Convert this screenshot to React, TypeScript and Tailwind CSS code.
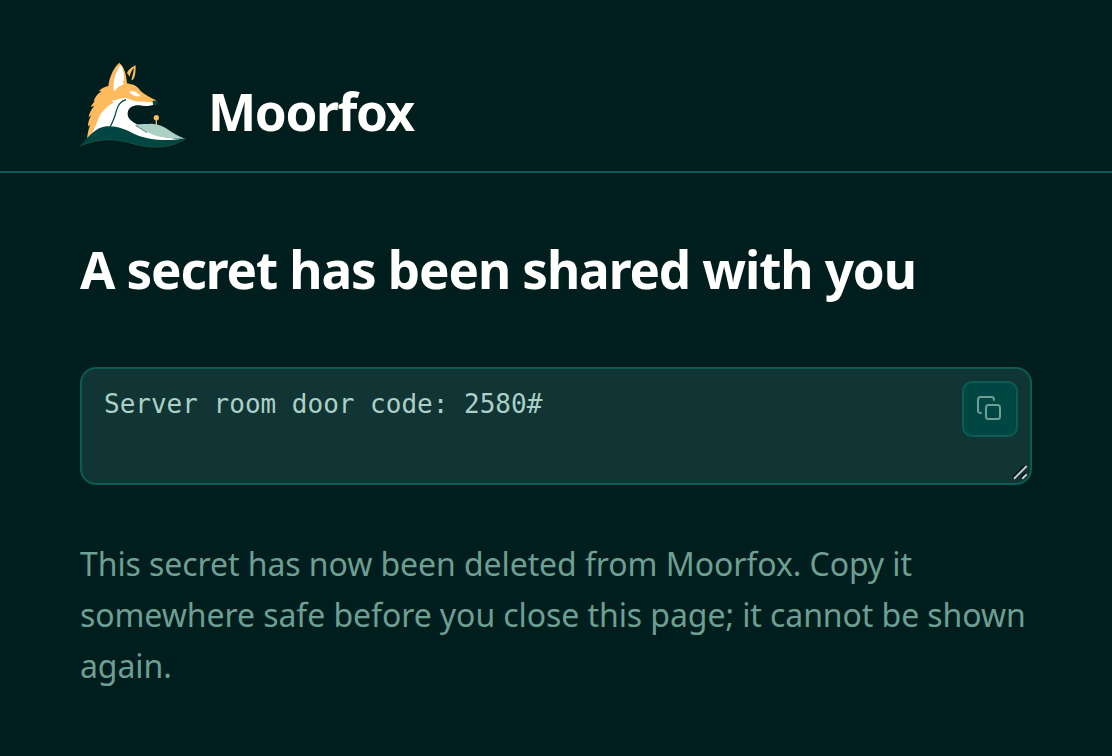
const FoxLogo = () => {
  return (
    <svg
      className="h-[86px] w-[108px] shrink-0"
      viewBox="6 6 324 258"
      fill="none"
      aria-hidden="true"
    >
      {/* far ear */}
      <path fill="#fdbb5e" d="M173 16C160 22 149 31 147 40L156 50L162 61C168 58 173 50 173 16Z" />
      <path fill="#001e1d" d="M168 24C160 32 156 42 155 54L161 58C163 48 166 38 168 24Z" />
      {/* fur, head and near ear */}
      <path
        fill="#fdbb5e"
        d="M124 8C110 20 95 45 91 78C80 80 71 85 62 94L71 94C58 101 50 112 47 125L51 123C46 129 42 133 38 141L49 137C41 147 33 159 32 172L40 166C34 176 30 187 30 199L36 195C32 208 28 222 27 239L45 225L100 190L150 135L224 131L234 121C214 112 200 103 188 93C178 78 166 73 147 70C145 45 140 22 124 8Z"
      />
      <path
        fill="#fffffe"
        d="M128 14C113 35 103 65 108 95C116 84 126 76 139 71L133 66L137 62C140 46 136 29 128 14Z"
      />
      {/* cheek, jaw and chest */}
      <path
        fill="#fffffe"
        d="M225 129C205 122 178 128 160 120C152 117 146 113 141 113C122 116 112 121 101 122L107 128C88 138 70 154 62 174C54 196 44 216 32 240L90 230L240 250L322 236C255 238 228 222 186 198C162 185 147 176 149 158C152 142 166 135 184 136C200 140 214 138 228 134Z"
      />
      <path fill="#fffffe" d="M153 95C165 91 181 96 188 109C174 111 161 106 153 95Z" />
      <path fill="#004643" d="M224 122L239 122C241 127 236 134 231 136L225 134Z" />
      <path stroke="#004643" strokeWidth="3.500" d="M144 119C127 124 119 136 115 153C110 174 103 188 96 202" />
      {/* moor */}
      <path
        fill="#abd1c6"
        d="M170 195C188 190 206 193 222 191C264 193 278 222 322 236C270 236 236 232 207 216Z"
      />
      <path
        fill="#004643"
        d="M6 258C32 230 54 201 86 199C116 197 142 208 168 221C205 239 265 246 325 235C300 252 271 262 232 262C194 262 172 253 144 246C92 234 52 240 6 258Z"
      />
      <path stroke="#fdbb5e" strokeOpacity="0.4" d="M6 258C52 240 92 234 144 246C172 253 194 262 232 262C271 262 300 252 325 235" />
      <path stroke="#004643" strokeWidth="2" d="M173 196L207 218" />
      <path stroke="#fdbb5e" strokeWidth="4" d="M235 176V196" />
      <circle cx="235" cy="173" r="8" fill="#fdbb5e" />
    </svg>
  );
};

const CopyIcon = () => {
  return (
    <svg
      className="h-[26px] w-[26px]"
      viewBox="0 0 26 26"
      fill="none"
      stroke="#6f9e92"
      strokeWidth="2"
      strokeLinecap="round"
      strokeLinejoin="round"
      aria-hidden="true"
    >
      <rect x="9" y="9" width="14" height="14" rx="2.500" />
      <path d="M4 17C2.500 17 1 16 1 14.500V3.500C1 2 2 1 3.500 1H14.500C16 1 17 2.500 17 4" />
    </svg>
  );
};

const ResizeGrip = () => {
  return (
    <svg
      className="pointer-events-none absolute right-1 bottom-1 size-4"
      viewBox="0 0 16 16"
      fill="none"
      aria-hidden="true"
    >
      <path stroke="#001010" strokeWidth="2" d="M1 12.500L13.500 0M9 12.500L13.500 8" />
      <path stroke="#c4cccb" strokeWidth="2" d="M2 13.700L14.700 1M10.200 13.700L14.700 9.200" />
    </svg>
  );
};

const Header = () => {
  return (
    <header className="flex h-[173px] items-start border-b-2 border-[#0b5c55] pt-[62px] pl-20">
      <FoxLogo />
      <span className="mt-[14px] ml-5 text-[51.2px] leading-[70px] font-bold tracking-[-1.4px]">
        Moorfox
      </span>
    </header>
  );
};

const SecretBox = () => {
  return (
    <div className="relative h-[118px]">
      <textarea
        className="block h-full w-full resize-none overflow-hidden rounded-2xl border-2 border-[#0b5c55] bg-[#113434] px-[22px] py-4 font-['DejaVu_Sans_Mono',monospace] text-[26px] leading-[39px] text-[#abd1c6] outline-none"
        defaultValue="Server room door code: 2580#"
        readOnly
      />
      <button
        className="absolute top-[14px] right-[14px] flex size-14 items-center justify-center rounded-[10px] border-2 border-[#0b5c55] bg-[#004643]"
        aria-label="Copy secret"
      >
        <CopyIcon />
      </button>
      <ResizeGrip />
    </div>
  );
};

export default function App() {
  return (
    <div className="min-h-screen bg-[#001e1d] font-['Noto_Sans',sans-serif] text-[#fffffe]">
      <Header />
      <main className="px-20 pt-[62px]">
        <h1 className="mb-[64px] text-[51.2px] leading-[68px] font-bold tracking-[-1.11px]">
          A secret has been shared with you
        </h1>
        <SecretBox />
        <p className="mt-[52.5px] text-[32px] leading-[51.2px] tracking-[-0.08px] text-[#6f9e92]">
          This secret has now been deleted from Moorfox. Copy it somewhere safe
          before you close this page; it cannot be shown again.
        </p>
      </main>
    </div>
  );
}
